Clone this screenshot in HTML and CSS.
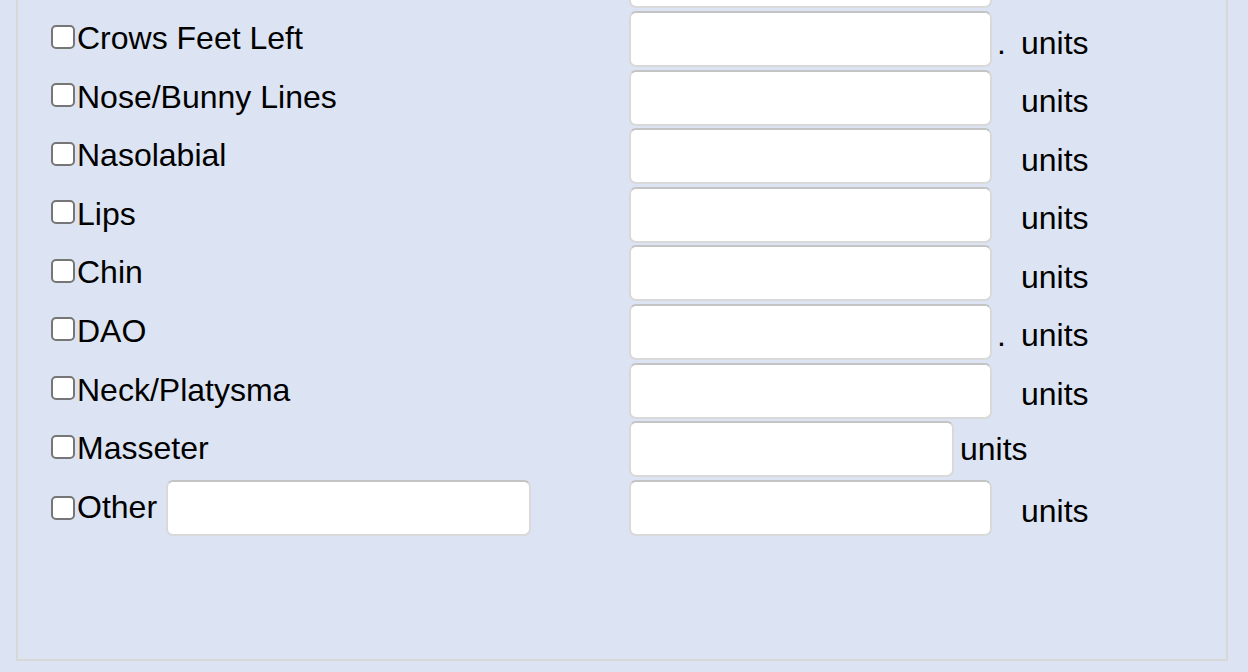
FILE: index.html
```html
<!DOCTYPE html>
<html lang="en">

<head>
    <meta charset="UTF-8">
    <meta name="viewport" content="width=device-width, initial-scale=1.0">
    <title>Treatment Areas</title>
    <link rel="stylesheet" href="styles.css">
</head>

<body>
    <div class="panel">
        <!-- row scrolled out above the fold, only its input's bottom edge shows -->
        <div class="row row-cut">
            <span class="area"></span>
            <input type="text" class="amount">
        </div>
        <div class="row">
            <label class="area"><input type="checkbox">Crows Feet Left</label>
            <input type="text" class="amount">
            <span class="suffix"><span class="dot">.</span>units</span>
        </div>
        <div class="row">
            <label class="area"><input type="checkbox">Nose/Bunny Lines</label>
            <input type="text" class="amount">
            <span class="suffix"><span class="dot"></span>units</span>
        </div>
        <div class="row">
            <label class="area"><input type="checkbox">Nasolabial</label>
            <input type="text" class="amount">
            <span class="suffix"><span class="dot"></span>units</span>
        </div>
        <div class="row">
            <label class="area"><input type="checkbox">Lips</label>
            <input type="text" class="amount">
            <span class="suffix"><span class="dot"></span>units</span>
        </div>
        <div class="row">
            <label class="area"><input type="checkbox">Chin</label>
            <input type="text" class="amount">
            <span class="suffix"><span class="dot"></span>units</span>
        </div>
        <div class="row">
            <label class="area"><input type="checkbox">DAO</label>
            <input type="text" class="amount">
            <span class="suffix"><span class="dot">.</span>units</span>
        </div>
        <div class="row">
            <label class="area"><input type="checkbox">Neck/Platysma</label>
            <input type="text" class="amount">
            <span class="suffix"><span class="dot"></span>units</span>
        </div>
        <div class="row">
            <label class="area"><input type="checkbox">Masseter</label>
            <input type="text" class="amount short">
            <span class="inline-units">units</span>
        </div>
        <div class="row">
            <label class="area area-other"><input type="checkbox">Other<input type="text" class="other-name"></label>
            <input type="text" class="amount">
            <span class="suffix"><span class="dot"></span>units</span>
        </div>
    </div>
</body>

</html>
```

FILE: styles.css
```css
html {
    background-color: #dce3f2;
}

body {
    margin: 0;
    font-family: "Liberation Sans", Arial, sans-serif;
    font-size: 32px;
    color: #000;
}

.panel {
    margin: -69.6px 20px 0 16px;
    padding: 20px 0 123px 33px;
    border: 2px solid #d8d8d8;
}

.row {
    display: flex;
    align-items: center;
    height: 56px;
    margin-bottom: 2.6px;
}

.row:last-child {
    margin-bottom: 0;
}

.area {
    width: 578px;
    flex-shrink: 0;
    display: flex;
    align-items: center;
    padding-bottom: 1px;
    white-space: nowrap;
}

.area-other {
    padding-bottom: 0;
}

input[type="checkbox"] {
    appearance: none;
    -webkit-appearance: none;
    width: 24px;
    height: 24px;
    margin: 0 2px 4px 0;
    border: 2px solid #767676;
    border-radius: 5px;
    background-color: #fff;
    flex-shrink: 0;
}

.area-other input[type="checkbox"] {
    margin-bottom: 0;
}

input[type="text"] {
    box-sizing: border-box;
    height: 56px;
    border: 2px solid #d9d9d9;
    border-top-color: #c4c4c4;
    border-radius: 7px;
    background-color: #fff;
    font: inherit;
    padding: 0 8px;
    margin: 0;
}

.amount {
    width: 363px;
    flex-shrink: 0;
}

.amount.short {
    width: 325px;
}

.other-name {
    width: 365px;
    margin-left: 9px !important;
}

.suffix {
    display: flex;
    margin-left: 5px;
    padding-top: 8px;
}

.dot {
    width: 24px;
}

.inline-units {
    margin-left: 6px;
}
```
